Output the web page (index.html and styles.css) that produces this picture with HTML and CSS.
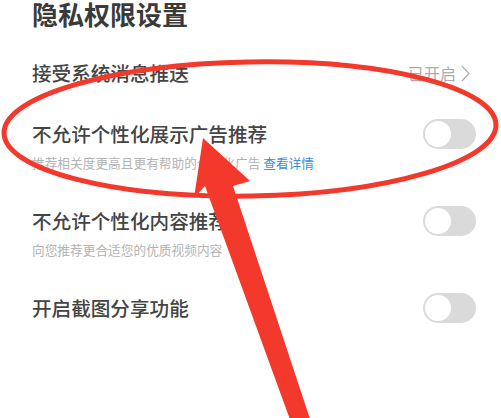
FILE: index.html
```html
<!DOCTYPE html>
<html lang="zh-CN">
<head>
<meta charset="utf-8">
<title>隐私权限设置</title>
<link rel="stylesheet" href="styles.css">
</head>
<body>
<div class="page">
  <h1 class="title">隐私权限设置</h1>
  <ul class="list">
    <li class="row">
      <div class="text"><div class="label">接受系统消息推送</div></div>
      <div class="status">已开启<svg class="chev" width="9" height="17" viewBox="0 0 9 17"><polyline points="1,1 8,8.5 1,16" fill="none" stroke="#b0b0b0" stroke-width="1.3"/></svg></div>
    </li>
    <li class="row has-sub">
      <div class="text">
        <div class="label">不允许个性化展示广告推荐</div>
        <div class="sub">推荐相关度更高且更有帮助的个性化广告 <span class="link">查看详情</span></div>
      </div>
      <span class="switch"></span>
    </li>
    <li class="row has-sub">
      <div class="text">
        <div class="label">不允许个性化内容推荐</div>
        <div class="sub">向您推荐更合适您的优质视频内容</div>
      </div>
      <span class="switch"></span>
    </li>
    <li class="row">
      <div class="text"><div class="label">开启截图分享功能</div></div>
      <span class="switch"></span>
    </li>
  </ul>
  <svg class="markup" width="501" height="418" viewBox="0 0 501 418">
    <ellipse cx="250" cy="129" rx="246" ry="67" transform="rotate(-1 250 129)" fill="none" stroke="#f2392c" stroke-width="5"/>
    <polygon points="203,138 250,181 233,186 312,425 292,425 205,186 194,198" fill="#f2392c"/>
  </svg>
</div>
</body>
</html>
```

FILE: styles.css
```css
html, body {
  margin: 0;
  background: #ffffff;
}

body {
  font-family: "Noto Sans CJK SC", "Noto Sans", sans-serif;
}

.page {
  position: relative;
  width: 501px;
  height: 418px;
  overflow: hidden;
  padding: 0 25px 0 32px;
  box-sizing: border-box;
}

.title {
  margin: 0;
  font-size: 26px;
  line-height: 28px;
  font-weight: 700;
  color: #3a3a3a;
}

.list {
  list-style: none;
  margin: 31px 0 0;
  padding: 0;
  display: flex;
  flex-direction: column;
  gap: 33px;
}

.row {
  display: flex;
  justify-content: space-between;
  align-items: flex-start;
}

.has-sub {
  padding-bottom: 2px;
}

.label {
  font-size: 19.6px;
  line-height: 28px;
  font-weight: 500;
  color: #444444;
  white-space: nowrap;
}

.sub {
  margin-top: 6px;
  font-size: 12.7px;
  line-height: 18px;
  color: #b3b3b3;
  white-space: nowrap;
}

.link {
  color: #3b8fe0;
}

.status {
  display: flex;
  align-items: center;
  gap: 5px;
  height: 28px;
  margin-right: 6px;
  font-size: 16px;
  color: #acacac;
}

.chev {
  display: block;
}

.switch {
  position: relative;
  flex: none;
  width: 53px;
  height: 30px;
  margin-top: -1px;
  border-radius: 15px;
  background: #dadada;
}

.switch::after {
  content: "";
  position: absolute;
  left: 2px;
  top: 2px;
  width: 26px;
  height: 26px;
  border-radius: 50%;
  background: #ffffff;
}

.markup {
  position: absolute;
  left: 0;
  top: 0;
  pointer-events: none;
}
```
